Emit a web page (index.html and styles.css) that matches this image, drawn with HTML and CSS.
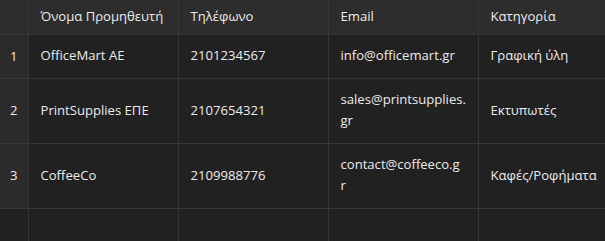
FILE: index.html
```html
<!DOCTYPE html>
<html>
<head>
<meta charset="utf-8">
<link rel="stylesheet" href="styles.css">
</head>
<body>
<div class="grid">
  <table class="sheet">
    <colgroup>
      <col class="c-idx"><col class="c-data"><col class="c-data"><col class="c-data"><col class="c-data">
    </colgroup>
    <thead>
      <tr class="head">
        <th class="idx"></th>
        <th>Όνομα Προμηθευτή</th>
        <th>Τηλέφωνο</th>
        <th>Email</th>
        <th>Κατηγορία</th>
      </tr>
    </thead>
    <tbody>
      <tr>
        <td class="idx">1</td>
        <td>OfficeMart AE</td>
        <td>2101234567</td>
        <td class="mail">info@officemart.gr</td>
        <td>Γραφική ύλη</td>
      </tr>
      <tr>
        <td class="idx">2</td>
        <td>PrintSupplies ΕΠΕ</td>
        <td>2107654321</td>
        <td class="mail">sales@printsupplies.<br>gr</td>
        <td>Εκτυπωτές</td>
      </tr>
      <tr>
        <td class="idx">3</td>
        <td>CoffeeCo</td>
        <td>2109988776</td>
        <td class="mail">contact@coffeeco.g<br>r</td>
        <td>Καφές/Ροφήματα</td>
      </tr>
      <tr class="empty">
        <td class="idx blank"></td>
        <td></td>
        <td></td>
        <td></td>
        <td></td>
      </tr>
    </tbody>
  </table>
</div>
</body>
</html>
```

FILE: styles.css
```css
html, body {
  margin: 0;
  padding: 0;
  background: #212121;
  overflow: hidden;
}

.grid {
  width: 605px;
  height: 241px;
  overflow: hidden;
}

.sheet {
  border-collapse: collapse;
  table-layout: fixed;
  width: 628px;
  font-family: "Open Sans", "Noto Sans", sans-serif;
  font-size: 13.1px;
  line-height: 21px;
  color: #ececec;
}

.c-idx { width: 28px; }
.c-data { width: 150px; }

.sheet th,
.sheet td {
  border-right: 1px solid #363636;
  border-bottom: 1px solid #363636;
  padding: 10px 8px 11px 12px;
  text-align: left;
  vertical-align: middle;
  font-weight: normal;
  white-space: nowrap;
}

.head th {
  background: #2d2d2d;
  height: 34px;
  padding-top: 0;
  padding-bottom: 0;
  box-sizing: border-box;
}

.sheet td {
  background: #212121;
}

.sheet td.idx {
  background: #2b2b2b;
  padding: 0 0 0 10px;
}

.sheet td.idx.blank {
  background: #212121;
}

.sheet td.mail {
  padding-bottom: 12px;
}

.empty td {
  height: 60px;
  padding: 0;
}
```
